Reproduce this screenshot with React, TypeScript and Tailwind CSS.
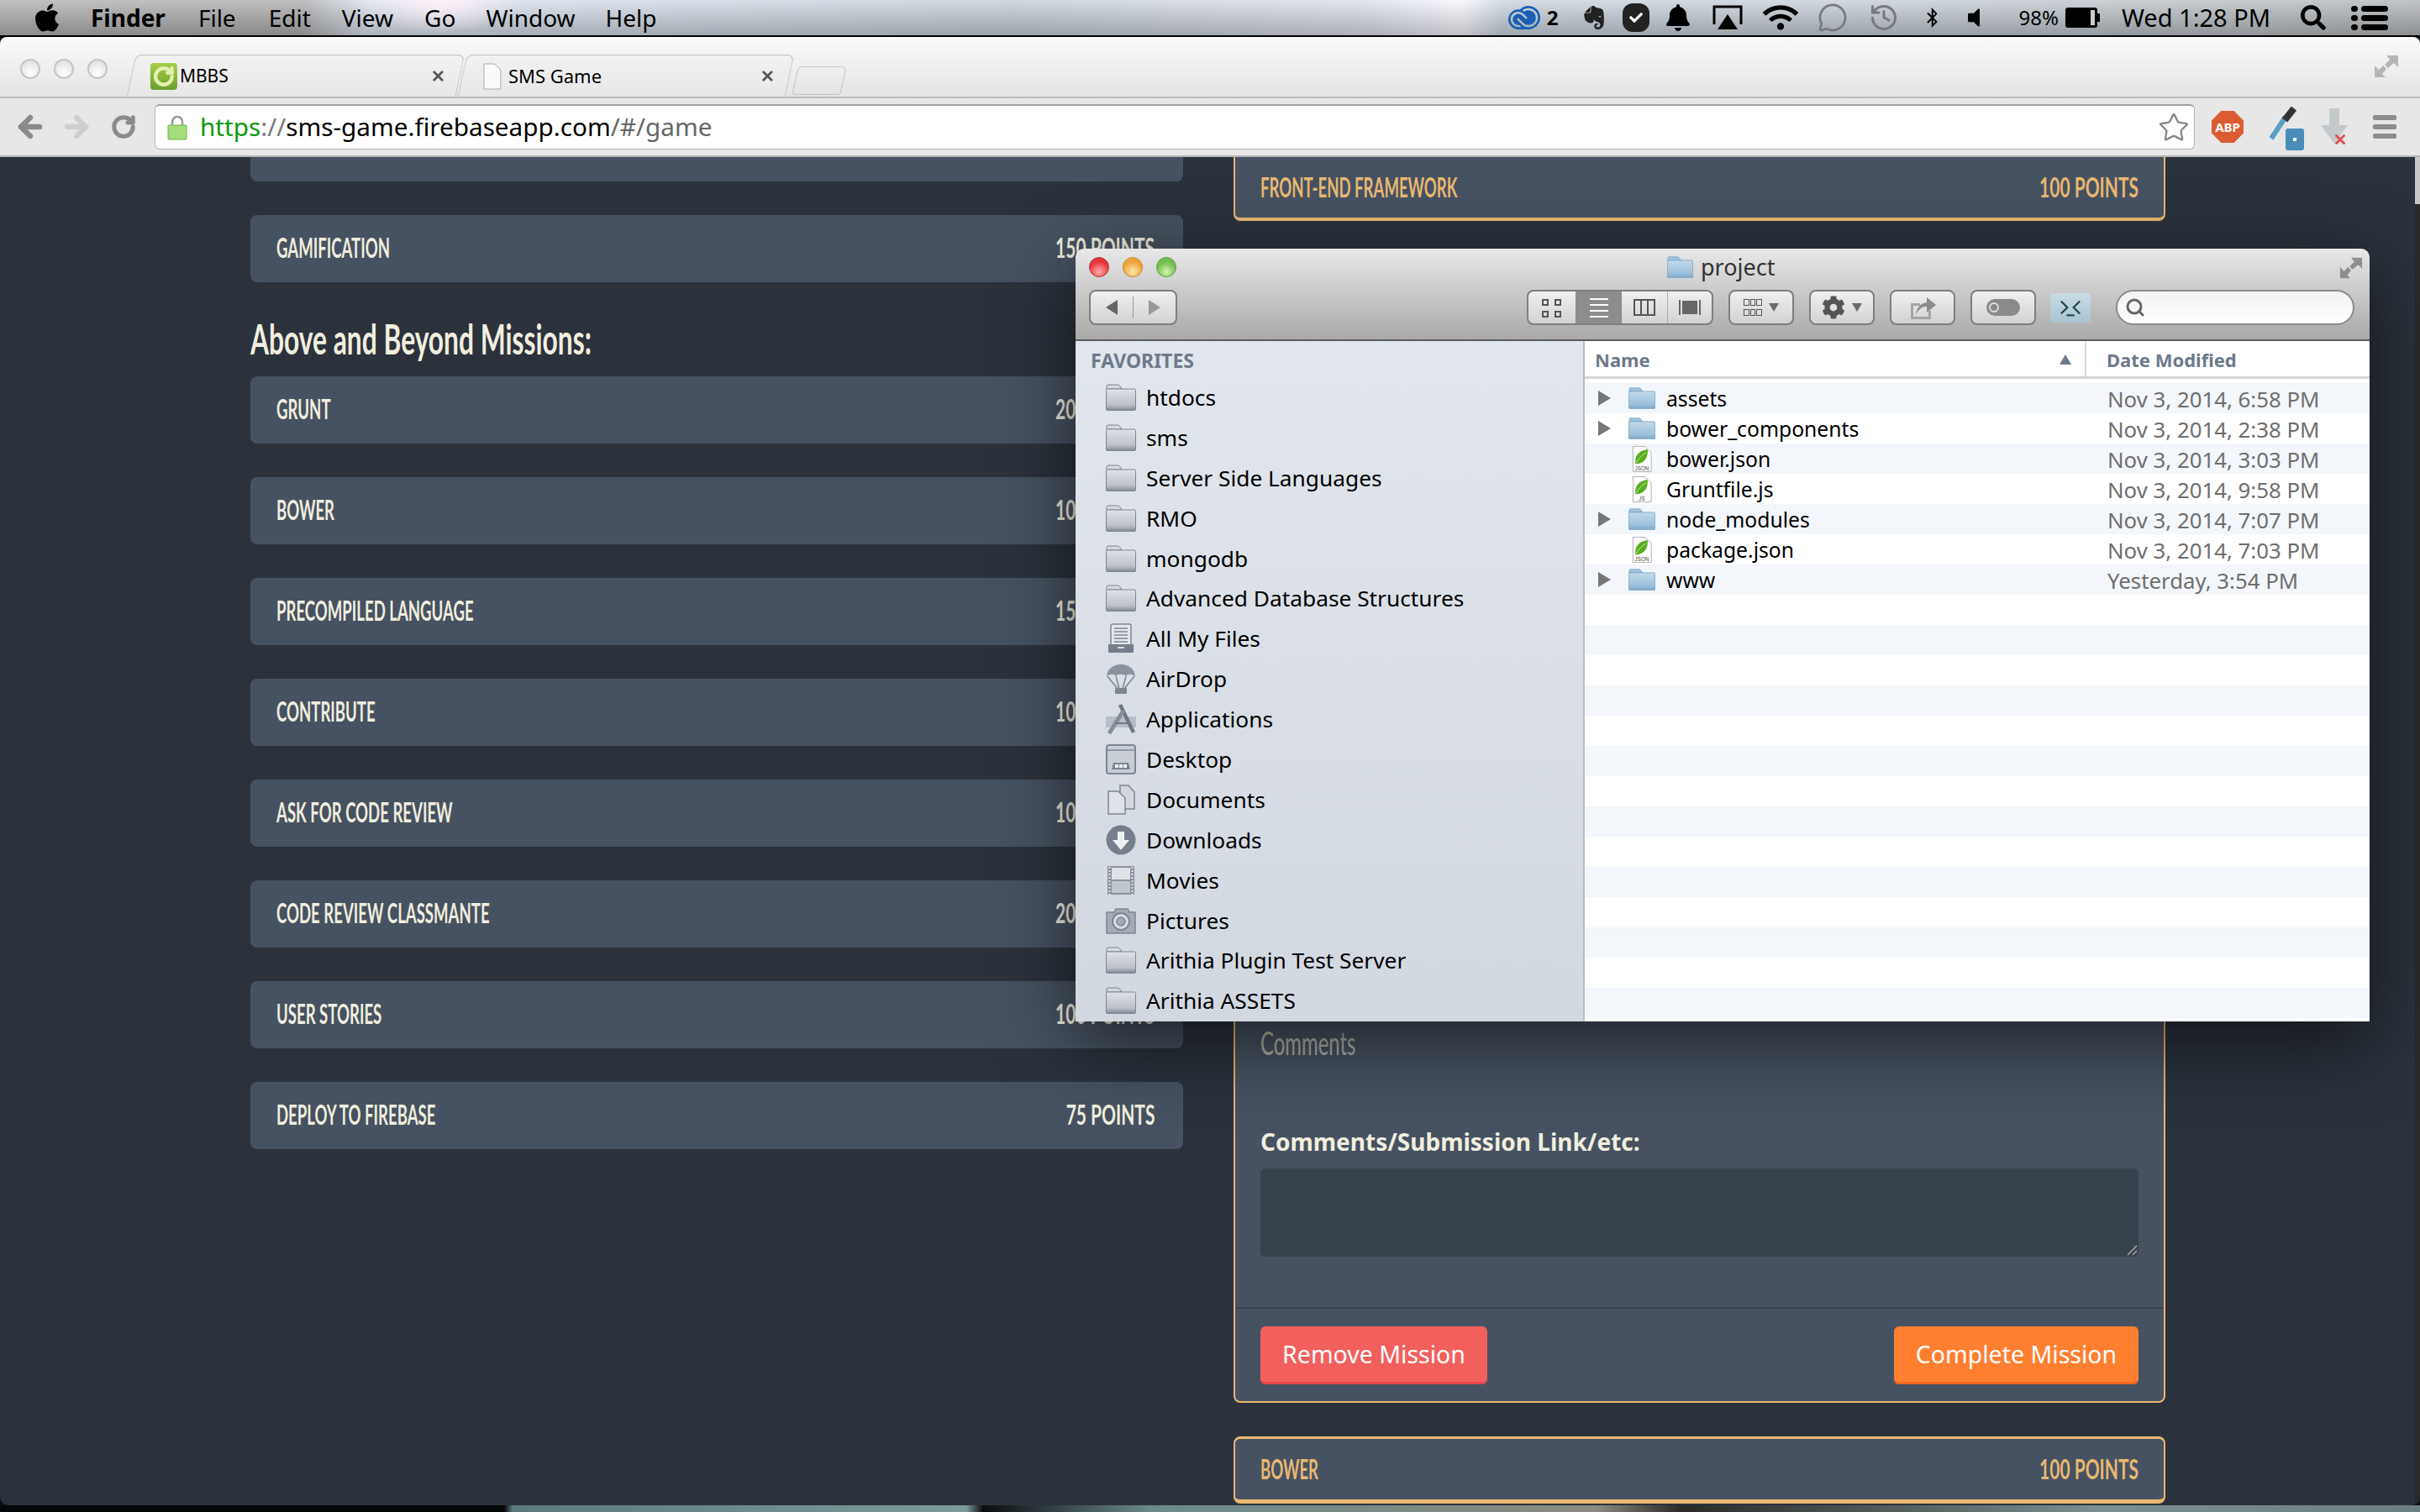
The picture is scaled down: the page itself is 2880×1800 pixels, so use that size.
import React from "react";
import { FaApple, FaBell, FaWifi, FaBluetoothB, FaVolumeOff, FaCog, FaSearch, FaCheck } from "react-icons/fa";
import { SiEvernote, SiAdobecreativecloud } from "react-icons/si";
import { MessageCircle, History, Star, RotateCw, ArrowLeft, ArrowRight, Search as LSearch, X } from "lucide-react";

function Cond({ children, right, className = "" }: { children: React.ReactNode; right?: boolean; className?: string }) {
  return (
    <span className={`inline-block whitespace-nowrap font-['Lato',sans-serif] font-bold text-[32px] leading-[40px] ${right ? "origin-right scale-x-[0.655]" : "origin-left scale-x-[0.58]"} ${className}`}>
      {children}
    </span>
  );
}

function Card({ name, points }: { name: string; points: string }) {
  return (
    <div className="h-[80px] w-full shrink-0 rounded-[8px] bg-[#465261] pl-[31px] pr-[34px] pb-[3px] flex items-center justify-between text-[#f1eedf]">
      <Cond>{name}</Cond>
      <Cond right>{points}</Cond>
    </div>
  );
}

function Folder({ blue, className = "" }: { blue?: boolean; className?: string }) {
  const id = blue ? "fb" : "fg";
  return (
    <svg viewBox="0 0 36 32" className={className} preserveAspectRatio="none">
      <defs>
        <linearGradient id={id} x1="0" y1="0" x2="0" y2="1">
          <stop offset="0" stopColor={blue ? "#c2d9ea" : "#dfe2e7"} />
          <stop offset="0.75" stopColor={blue ? "#9cc0dc" : "#bcc1c9"} />
          <stop offset="1" stopColor={blue ? "#7ba5c6" : "#7f8792"} />
        </linearGradient>
      </defs>
      <path d="M1 6 L1 3 Q1 1 3 1 L14 1 Q16 1 17 3 L19 6 Z" fill={blue ? "#a3c3dc" : "#d6dae0"} stroke={blue ? "#7ea5c4" : "#7d8591"} strokeWidth="1" />
      <rect x="0.5" y="6" width="35" height="25.5" rx="1.5" fill={`url(#${id})`} stroke={blue ? "#7ea5c4" : "#7d8591"} strokeWidth="1" />
    </svg>
  );
}

function FileIcon({ kind }: { kind: string }) {
  return (
    <svg viewBox="0 0 24 32" className="w-[24px] h-[31px]">
      <path d="M1 .5 H16 L23.5 8 V31.5 H1 Z" fill="#fff" stroke="#b0b0b0" />
      <path d="M19 4 C8 6 3 11 4 22 C13 22 20 16 19 4 Z" fill="#58ad1e" />
      <path d="M5 21 C8 15 11 12 17 8" stroke="#c6e8a2" fill="none" strokeWidth="1" />
      <text x="12" y="29.5" fontSize="6.5" textAnchor="middle" fill="#444" fontFamily="Liberation Sans, sans-serif">{kind}</text>
    </svg>
  );
}

const G = "#7d8692";
function SideIcon({ name }: { name: string }) {
  const c = "w-[36px] h-[36px]";
  switch (name) {
    case "files":
      return (
        <svg viewBox="0 0 36 36" className={c}>
          <rect x="6" y="1" width="24" height="26" rx="2" fill="#e3e6ea" stroke={G} strokeWidth="1.5" />
          <path d="M10 6H26M10 10H26M10 14H26M10 18H26M10 22H26" stroke={G} strokeWidth="1.5" />
          <path d="M3 25H33V34Q33 35 32 35H4Q3 35 3 34Z" fill="#757e8a" />
          <rect x="14" y="28" width="8" height="2" fill="#d5d9df" />
        </svg>
      );
    case "airdrop":
      return (
        <svg viewBox="0 0 36 36" className={c}>
          <path d="M1 15C2 6 9 1 18 1S34 6 35 15C30 12 26 12 24 15C22 12 14 12 12 15C10 12 6 12 1 15Z" fill="#8b939e" />
          <path d="M2 15L14 30M12 15L16 30M24 15L20 30M34 15L22 30" stroke={G} strokeWidth="1.5" fill="none" />
          <rect x="11" y="29" width="14" height="7" rx="1" fill="#7d8692" />
        </svg>
      );
    case "apps":
      return (
        <svg viewBox="0 0 36 36" className={c}>
          <path d="M0 15H36V28H0Z" fill="#a9b0ba" opacity="0.7" />
          <path d="M17 1L33 34" stroke="#6f7884" strokeWidth="4.5" fill="none" />
          <path d="M21 8L4 35" stroke="#858d99" strokeWidth="5" fill="none" />
          <path d="M11 23H26" stroke="#6f7884" strokeWidth="2" />
        </svg>
      );
    case "desktop":
      return (
        <svg viewBox="0 0 36 36" className={c}>
          <rect x="1" y="1" width="34" height="34" rx="3" fill="#c9ced6" stroke={G} strokeWidth="2" />
          <path d="M2 7H34" stroke={G} strokeWidth="1.5" />
          <path d="M7 30L9 22H27L29 30Z" fill="#7d8692" />
          <path d="M11 24H15V28H11ZM16 24H20V28H16ZM21 24H25V28H21Z" fill="#eef0f3" />
        </svg>
      );
    case "docs":
      return (
        <svg viewBox="0 0 36 36" className={c}>
          <path d="M17 1H27L34 9V29H17Z" fill="#d4d8de" stroke={G} strokeWidth="1.5" />
          <path d="M3 8H15L23 16V35H3Z" fill="#dfe2e7" stroke={G} strokeWidth="1.5" />
        </svg>
      );
    case "downloads":
      return (
        <svg viewBox="0 0 36 36" className={c}>
          <circle cx="18" cy="18" r="17.5" fill="#767f8b" />
          <path d="M14 8H22V18H28L18 30L8 18H14Z" fill="#eef0f3" />
        </svg>
      );
    case "movies":
      return (
        <svg viewBox="0 0 36 36" className={c}>
          <rect x="2" y="1" width="32" height="34" fill="#8a929e" />
          <rect x="7" y="3" width="22" height="14" fill="#dfe2e7" />
          <rect x="7" y="19" width="22" height="14" fill="#c2c7cf" />
          <path d="M4.5 2V35M31.5 2V35" stroke="#e6e8ec" strokeWidth="2" strokeDasharray="2 2" />
        </svg>
      );
    case "pictures":
      return (
        <svg viewBox="0 0 36 36" className={c}>
          <path d="M1 8H10L12 4H26L28 8H35V33H1Z" fill="#a4abb5" stroke={G} strokeWidth="1.5" strokeLinejoin="round" />
          <circle cx="18" cy="19" r="10" fill="#d8dce1" stroke="#7d8692" strokeWidth="2" />
          <circle cx="18" cy="19" r="5" fill="#a4abb5" stroke="#7d8692" strokeWidth="1.5" />
        </svg>
      );
    default:
      return <Folder className="w-[36px] h-[32px]" />;
  }
}

const side: [string, string][] = [
  ["htdocs", "f"], ["sms", "f"], ["Server Side Languages", "f"], ["RMO", "f"], ["mongodb", "f"],
  ["Advanced Database Structures", "f"], ["All My Files", "files"], ["AirDrop", "airdrop"], ["Applications", "apps"],
  ["Desktop", "desktop"], ["Documents", "docs"], ["Downloads", "downloads"], ["Movies", "movies"], ["Pictures", "pictures"],
  ["Arithia Plugin Test Server", "f"], ["Arithia ASSETS", "f"],
];

const files: [string, string, string, string][] = [
  ["assets", "Nov 3, 2014, 6:58 PM", "dir", ""],
  ["bower_components", "Nov 3, 2014, 2:38 PM", "dir", ""],
  ["bower.json", "Nov 3, 2014, 3:03 PM", "file", "JSON"],
  ["Gruntfile.js", "Nov 3, 2014, 9:58 PM", "file", "JS"],
  ["node_modules", "Nov 3, 2014, 7:07 PM", "dir", ""],
  ["package.json", "Nov 3, 2014, 7:03 PM", "file", "JSON"],
  ["www", "Yesterday, 3:54 PM", "dir", ""],
];

function TBtn({ w, children }: { w: string; children?: React.ReactNode }) {
  return (
    <div className={`${w} h-[42px] shrink-0 rounded-[8px] border-2 border-[#7e7e7e] bg-[linear-gradient(180deg,#f0f0f0,#d2d2d2)] flex items-center justify-center gap-[8px]`}>
      {children}
    </div>
  );
}

const Caret = () => <div className="w-0 h-0 border-x-[6px] border-x-transparent border-t-[10px] border-t-[#6a6a6a]" />;

function Finder() {
  return (
    <div className="absolute left-[1280px] top-[296px] w-[1540px] h-[920px] rounded-t-[10px] overflow-hidden flex flex-col shadow-[0_24px_90px_rgba(0,0,0,0.6)] font-['Noto_Sans',sans-serif]">
      <div className="relative h-[110px] shrink-0 bg-[linear-gradient(180deg,#e8e8e8,#a9a9a9)] border-b-2 border-[#5c5c5c]">
        <div className="absolute left-[16px] top-[10px] flex gap-[16px]">
          <div className="w-[24px] h-[24px] rounded-full border border-[#a33] bg-[radial-gradient(circle_at_50%_75%,#ffb0b0,#e8333b_60%)]" />
          <div className="w-[24px] h-[24px] rounded-full border border-[#b8862a] bg-[radial-gradient(circle_at_50%_75%,#ffe9a8,#eda33a_60%)]" />
          <div className="w-[24px] h-[24px] rounded-full border border-[#5a9a3a] bg-[radial-gradient(circle_at_50%_75%,#d4f5b0,#72bc4e_60%)]" />
        </div>
        <div className="absolute left-[704px] top-[6px] flex items-center gap-[9px]">
          <Folder blue className="w-[31px] h-[26px]" />
          <span className="text-[27px] leading-[32px] text-[#333]">project</span>
        </div>
        <svg viewBox="0 0 30 30" className="absolute left-[1504px] top-[9px] w-[28px] h-[28px]" fill="#8f8f8f">
          <path d="M15 2H29V16L24 11L17 17L13 13L19 7Z" /><path d="M1 28V14L6 19L11 14L15 18L10 24L14 28Z" />
        </svg>
        <div className="absolute left-[16px] right-[18px] top-[49px] flex items-center">
          <div className="w-[105px] h-[42px] rounded-[8px] border-2 border-[#7e7e7e] bg-[linear-gradient(180deg,#f0f0f0,#d2d2d2)] flex items-center justify-between px-[18px] relative">
            <div className="w-0 h-0 border-y-[9px] border-y-transparent border-r-[14px] border-r-[#666]" />
            <div className="absolute left-[50px] top-[6px] bottom-[6px] w-px bg-[#999]" />
            <div className="w-0 h-0 border-y-[9px] border-y-transparent border-l-[14px] border-l-[#999]" />
          </div>
          <div className="ml-[416px] w-[222px] h-[42px] rounded-[8px] border-2 border-[#7e7e7e] bg-[linear-gradient(180deg,#f0f0f0,#d2d2d2)] flex overflow-hidden">
            <div className="w-[56px] grid grid-cols-2 gap-[6px] px-[16px] py-[9px]">
              {[0, 1, 2, 3].map((i) => <div key={i} className="w-[8px] h-[8px] border-2 border-[#555]" />)}
            </div>
            <div className="w-[55px] bg-[#8d8d8d] flex flex-col justify-center items-center gap-[5px]">
              {[0, 1, 2, 3].map((i) => <div key={i} className="w-[22px] h-[2px] bg-white" />)}
            </div>
            <div className="w-[54px] flex items-center justify-center">
              <div className="w-[26px] h-[20px] border-2 border-[#555] flex justify-evenly"><div className="w-[2px] bg-[#555]" /><div className="w-[2px] bg-[#555]" /></div>
            </div>
            <div className="flex-1 flex items-center justify-center gap-[2px] border-l border-[#aaa]">
              <div className="w-[2px] h-[18px] bg-[#666]" /><div className="w-[18px] h-[16px] bg-[#666]" /><div className="w-[2px] h-[18px] bg-[#666]" />
            </div>
          </div>
          <div className="ml-[18px]"><TBtn w="w-[78px]">
            <div className="grid grid-cols-3 gap-[1px] w-[22px]">
              {[0, 1, 2, 3, 4, 5].map((i) => <div key={i} className={`h-[8px] border border-[#555] ${i < 3 ? "mb-[3px]" : ""}`} />)}
            </div>
            <Caret />
          </TBtn></div>
          <div className="ml-[18px]"><TBtn w="w-[78px]"><FaCog className="text-[#555] w-[28px] h-[28px]" /><Caret /></TBtn></div>
          <div className="ml-[18px]"><TBtn w="w-[78px]">
            <svg viewBox="0 0 34 30" className="w-[34px] h-[30px]"><path d="M3 10H14V13H6V26H24V19H27V29H3Z" fill="#a3a3a3" /><path d="M9 24C10 15 15 10 22 9V3L33 12L22 21V14C16 14 12 17 9 24Z" fill="#8d8d8d" /></svg>
          </TBtn></div>
          <div className="ml-[18px]"><TBtn w="w-[78px]"><div className="w-[40px] h-[20px] rounded-full bg-[#8a8a8a] flex items-center pl-[3px]"><div className="w-[12px] h-[12px] rounded-full border-2 border-[#ddd]" /></div></TBtn></div>
          <div className="ml-[17px] w-[48px] h-[35px] rounded-[4px] bg-[linear-gradient(180deg,#c9dce5,#a9c3d0)] flex items-center justify-center">
            <svg viewBox="0 0 30 24" className="w-[28px] h-[26px]" fill="none" stroke="#1d4a50" strokeWidth="2.5"><path d="M3 4L11 12L3 20M27 4L19 12L27 20" /><path d="M10 22H20" /></svg>
          </div>
          <div className="ml-[30px] flex-1 h-[42px] rounded-full border-2 border-[#8a8a8a] bg-[linear-gradient(180deg,#f2f2f2,#fff)] flex items-center pl-[9px]">
            <LSearch className="w-[24px] h-[24px] text-[#666]" strokeWidth={3} />
          </div>
        </div>
      </div>
      <div className="flex-1 flex min-h-0">
        <div className="w-[606px] shrink-0 border-r-2 border-[#b9bdc2] bg-[linear-gradient(180deg,#e2e6ed,#d2d8e0)] overflow-hidden pt-[9px] pl-[18px]">
          <div className="text-[23px] leading-[28px] font-bold text-[#6d7a8b]">FAVORITES</div>
          <div className="mt-[6px] flex flex-col">
            {side.map(([n, i]) => (
              <div key={n} className="h-[47.9px] shrink-0 flex items-center">
                <div className="w-[36px] ml-[18px] flex justify-center"><SideIcon name={i} /></div>
                <span className="ml-[12px] text-[26.3px] leading-[32px] text-black whitespace-nowrap">{n}</span>
              </div>
            ))}
          </div>
        </div>
        <div className="flex-1 bg-white flex flex-col min-w-0 overflow-hidden">
          <div className="h-[45px] shrink-0 flex items-stretch border-b-[3px] border-[#d4d4d4] text-[22px] font-bold text-[#6d7a8b]">
            <div className="w-[597px] pl-[12px] pt-[2px] flex items-center justify-between pr-[16px] border-r-2 border-[#dcdcdc]">
              <span>Name</span>
              <div className="w-0 h-0 border-x-[7px] border-x-transparent border-b-[12px] border-b-[#6d7a8b]" />
            </div>
            <div className="pl-[24px] pt-[2px] flex items-center">Date Modified</div>
          </div>
          <div className="h-[5px] shrink-0" />
          {Array.from({ length: 22 }).map((_, i) => {
            const f = files[i];
            return (
              <div key={i} className={`h-[36px] shrink-0 flex items-center text-[26px] ${i % 2 === 0 ? "bg-[#f3f6fa]" : "bg-white"}`}>
                {f && (
                  <>
                    <div className="w-[18px] ml-[16px]">{f[2] === "dir" && <div className="w-0 h-0 border-y-[9px] border-y-transparent border-l-[15px] border-l-[#777]" />}</div>
                    <div className="w-[32px] ml-[18px] flex justify-center">
                      {f[2] === "dir" ? <Folder blue className="w-[32px] h-[26px]" /> : <FileIcon kind={f[3]} />}
                    </div>
                    <span className="ml-[13px] w-[525px] text-[24.7px] text-black whitespace-nowrap translate-y-[1px]">{f[0]}</span>
                    <span className="text-[25.8px] text-[#6e6e6e] whitespace-nowrap translate-y-[1px]">{f[1]}</span>
                  </>
                )}
              </div>
            );
          })}
        </div>
      </div>
    </div>
  );
}

function MenuBar() {
  const items: [string, string][] = [["File", "ml-[39px]"], ["Edit", "ml-[39px]"], ["View", "ml-[37px]"], ["Go", "ml-[37px]"], ["Window", "ml-[36px]"], ["Help", "ml-[36px]"]];
  return (
    <div className="h-[44px] shrink-0 border-b-2 border-black flex items-center text-[28px] text-black font-['Noto_Sans',sans-serif] bg-[radial-gradient(ellipse_90px_40px_at_525px_0,#fff0fa,rgba(255,255,255,0)),linear-gradient(180deg,rgba(255,255,255,0.18),rgba(0,0,0,0.22)),linear-gradient(90deg,#b4b4b4_0,#b0b0b2_360px,#dfe6f2_440px,#d5dde8_700px,#c7d0da_1200px,#dde0ec_1620px,#f8f8ff_1740px,#cdd6e0_1790px,#c6ced6_2300px,#b5b8bb_2880px)]">
      <FaApple className="ml-[39px] w-[34px] h-[38px] text-black" />
      <span className="ml-[35px] font-bold text-[28px]">Finder</span>
      {items.map(([t, m]) => <span key={t} className={m}>{t}</span>)}
      <div className="ml-auto flex items-center">
        <SiAdobecreativecloud className="w-[38px] h-[38px] text-[#1a5fb4]" />
        <span className="ml-[8px] text-[24px] font-bold">2</span>
        <SiEvernote className="ml-[28px] w-[28px] h-[36px] text-[#222]" />
        <div className="ml-[20px] w-[32px] h-[34px] rounded-[12px] bg-[#222] flex items-center justify-center"><FaCheck className="text-white w-[16px] h-[16px]" /></div>
        <FaBell className="ml-[20px] w-[28px] h-[32px]" />
        <svg viewBox="0 0 38 32" className="ml-[26px] w-[38px] h-[32px]"><path d="M3 24V3H35V24" fill="none" stroke="#000" strokeWidth="3" /><path d="M19 12L31 30H7Z" fill="#000" /></svg>
        <FaWifi className="ml-[23px] w-[42px] h-[34px]" />
        <MessageCircle className="ml-[20px] w-[42px] h-[36px] text-[#77797c]" strokeWidth={1.8} />
        <History className="ml-[22px] w-[36px] h-[36px] text-[#77797c]" strokeWidth={2} />
        <FaBluetoothB className="ml-[32px] w-[15px] h-[30px]" />
        <FaVolumeOff className="ml-[34px] w-[16px] h-[28px]" />
        <span className="ml-[46px] text-[24px]">98%</span>
        <div className="ml-[8px] w-[38px] h-[24px] border-[3px] border-black bg-[linear-gradient(90deg,#000_85%,#ccc_85%)] rounded-[3px]" />
        <div className="w-[3px] h-[10px] bg-black mr-[26px]" />
        <span className="text-[29px] whitespace-nowrap">Wed 1:28 PM</span>
        <FaSearch className="ml-[36px] w-[30px] h-[30px]" />
        <div className="ml-[30px] mr-[38px] w-[44px] flex flex-col gap-[4px]">
          {[0, 1, 2].map((i) => <div key={i} className="flex gap-[4px]"><div className="w-[8px] h-[7px] rounded-full bg-black" /><div className="flex-1 h-[7px] rounded-full bg-black" /></div>)}
        </div>
      </div>
    </div>
  );
}

function Tab({ children, w }: { children: React.ReactNode; w: string }) {
  return (
    <div className={`${w} h-[50px] shrink-0 -skew-x-[12deg] rounded-t-[8px] border border-b-0 border-[#c2c2c2] bg-[linear-gradient(180deg,#f2f2f2,#e7e7e7)]`}>
      <div className="skew-x-[12deg] h-full flex items-center pl-[22px] pr-[16px] text-[22px] text-black">{children}</div>
    </div>
  );
}

function BrowserBar() {
  return (
    <div className="shrink-0 font-['Noto_Sans',sans-serif]">
      <div className="h-[73px] rounded-t-[8px] bg-[linear-gradient(180deg,#fafafa,#e4e4e4)] border-b-2 border-[#b9b9b9] relative flex items-end pl-[24px]">
        <div className="absolute left-[24px] top-[26px] flex gap-[16px]">
          {[0, 1, 2].map((i) => <div key={i} className="w-[24px] h-[24px] rounded-full border-2 border-[#c4c4c4] bg-[radial-gradient(circle_at_50%_75%,#fff,#dcdcdc)]" />)}
        </div>
        <div className="ml-[132px] flex items-end gap-[2px]">
          <Tab w="w-[392px]">
            <div className="w-[32px] h-[32px] rounded-[4px] bg-[linear-gradient(180deg,#a5cf4a,#6b9e2e)] flex items-center justify-center">
              <RotateCw className="w-[26px] h-[26px] text-[#e4f0b0]" strokeWidth={4} />
            </div>
            <span className="ml-[3px] text-[21px]">MBBS</span>
            <X className="ml-auto w-[19px] h-[19px] text-[#555]" strokeWidth={3.5} />
          </Tab>
          <Tab w="w-[390px]">
            <svg viewBox="0 0 22 32" className="ml-[2px] w-[22px] h-[32px]"><path d="M1 1H14L21 8V31H1Z" fill="#fafafa" stroke="#aaa" /></svg>
            <span className="ml-[8px]">SMS Game</span>
            <X className="ml-auto w-[19px] h-[19px] text-[#555]" strokeWidth={3.5} />
          </Tab>
          <div className="w-[58px] h-[34px] shrink-0 -skew-x-[12deg] rounded-t-[6px] rounded-b-[4px] border border-[#c4c4c4] bg-[linear-gradient(180deg,#efefef,#e4e4e4)] ml-[4px] mb-[2px]" />
        </div>
        <svg viewBox="0 0 30 30" className="absolute right-[25px] top-[20px] w-[30px] h-[30px]" fill="#b5b5b5">
          <path d="M15 2H29V16L24 11L17 17L13 13L19 7Z" /><path d="M1 28V14L6 19L11 14L15 18L10 24L14 28Z" />
        </svg>
      </div>
      <div className="h-[70px] bg-[#e7e7e7] border-b-2 border-[#b5b5b5] flex items-center">
        <ArrowLeft className="ml-[17px] w-[38px] h-[38px] text-[#8a8a8a]" strokeWidth={4} />
        <ArrowRight className="ml-[17px] w-[38px] h-[38px] text-[#cfcfcf]" strokeWidth={4} />
        <RotateCw className="ml-[22px] w-[30px] h-[30px] text-[#8a8a8a]" strokeWidth={4} />
        <div className="ml-[22px] w-[2428px] h-[54px] rounded-[6px] border border-[#b0b0b0] border-t-2 border-t-[#a0a0a0] bg-white flex items-center pl-[14px] pr-[5px]">
          <svg viewBox="0 0 24 30" className="w-[24px] h-[30px]"><path d="M6 13V8a6 6 0 0 1 12 0V13" fill="none" stroke="#999" strokeWidth="2.5" /><rect x="1" y="12" width="22" height="17" rx="1" fill="#a4dd7c" stroke="#77b04e" /></svg>
          <span className="ml-[15px] text-[29.7px] whitespace-nowrap">
            <span className="text-[#0a9a0a]">https</span><span className="text-[#777]">://</span><span className="text-black">sms-game.firebaseapp.com</span><span className="text-[#666]">/#/game</span>
          </span>
          <Star className="ml-auto w-[38px] h-[38px] text-[#888]" strokeWidth={1.5} />
        </div>
        <div className="ml-[20px] w-[38px] h-[38px] bg-[#dc5b33] [clip-path:polygon(30%_0,70%_0,100%_30%,100%_70%,70%_100%,30%_100%,0_70%,0_30%)] flex items-center justify-center text-white text-[15px] font-bold">ABP</div>
        <div className="relative ml-[30px] w-[36px] h-[48px]">
          <svg viewBox="0 0 36 48" className="w-[36px] h-[48px]"><path d="M3 38L20 12" stroke="#5a9fc9" strokeWidth="6" /><path d="M19 16L30 2" stroke="#333" strokeWidth="8" /></svg>
          <div className="absolute right-[-6px] bottom-[-4px] w-[22px] h-[26px] rounded-[3px] bg-[#4a8db8] flex items-center justify-center"><div className="w-[4px] h-[4px] bg-white" /></div>
        </div>
        <div className="relative ml-[26px] w-[32px] h-[44px]">
          <svg viewBox="0 0 32 44" className="w-[32px] h-[44px]"><path d="M10 0H22V20H32L16 42L0 20H10Z" fill="#c4c9cc" /></svg>
          <X className="absolute right-[0px] bottom-[-2px] w-[18px] h-[18px] text-[#e05050]" strokeWidth={4} />
        </div>
        <div className="ml-[30px] w-[28px] flex flex-col gap-[5px]">
          {[0, 1, 2].map((i) => <div key={i} className="h-[6px] rounded-[2px] bg-[#8c8c8c]" />)}
        </div>
      </div>
    </div>
  );
}

const OCard = ({ children, className = "" }: { children: React.ReactNode; className?: string }) => (
  <div className={`w-full shrink-0 bg-[#465261] border-[#e9b872] flex items-center justify-between px-[30px] text-[#e9b872] ${className}`}>{children}</div>
);

export default function App() {
  const left: [string, string][] = [
    ["GRUNT", "200 POINTS"], ["BOWER", "100 POINTS"], ["PRECOMPILED LANGUAGE", "150 POINTS"], ["CONTRIBUTE", "100 POINTS"],
    ["ASK FOR CODE REVIEW", "100 POINTS"], ["CODE REVIEW CLASSMANTE", "200 POINTS"], ["USER STORIES", "100 POINTS"], ["DEPLOY TO FIREBASE", "75 POINTS"],
  ];
  return (
    <div className="relative w-[2880px] h-[1800px] overflow-hidden bg-[#0a0f12] flex flex-col">
      <MenuBar />
      <BrowserBar />
      <div className="relative h-[1605px] shrink-0 bg-[#2b323c] rounded-b-[10px] overflow-hidden flex pl-[298px]">
        <div className="w-[1110px] shrink-0 flex flex-col">
          <div className="h-[29px] shrink-0 bg-[#465261] rounded-b-[8px]" />
          <div className="mt-[40px]"><Card name="GAMIFICATION" points="150 POINTS" /></div>
          <div className="h-[112px] shrink-0 flex items-center pt-[22px]">
            <span className="whitespace-nowrap inline-block origin-left scale-x-[0.635] font-['Lato',sans-serif] font-bold text-[50px] leading-[56px] text-[#f1eedf]">Above and Beyond Missions:</span>
          </div>
          <div className="flex flex-col gap-[40px]">
            {left.map(([n, p]) => <Card key={n} name={n} points={p} />)}
          </div>
        </div>
        <div className="ml-[60px] w-[1109px] shrink-0 flex flex-col">
          <OCard className="h-[76px] border-x-2 border-b-[4px] rounded-b-[8px]">
            <Cond>FRONT-END FRAMEWORK</Cond>
            <Cond right>100 POINTS</Cond>
          </OCard>
          <div className="mt-[40px] h-[1367px] shrink-0 rounded-[8px] border-2 border-[#e9b872] bg-[#465261] flex flex-col">
            <div className="flex-1 flex flex-col justify-end px-[30px] pb-[60px]">
              <span className="whitespace-nowrap inline-block origin-left scale-x-[0.63] font-['Lato',sans-serif] text-[38px] leading-[40px] text-[#b4b3a6] -translate-y-[2px]">Comments</span>
              <div className="mt-[79px] font-['Noto_Sans',sans-serif] text-[28px] leading-[34px] font-bold text-[#f1eedf]">Comments/Submission Link/etc:</div>
              <div className="relative mt-[15px] h-[105px] rounded-[6px] bg-[#38424c]">
                <svg viewBox="0 0 14 14" className="absolute right-[1px] bottom-[1px] w-[14px] h-[14px]"><path d="M13 2L2 13M13 8L8 13" stroke="#aaa" strokeWidth="1.5" /></svg>
              </div>
            </div>
            <div className="h-[112px] shrink-0 border-t-[2px] border-[#38424c] flex justify-between px-[30px] pt-[21px] font-['Noto_Sans',sans-serif] text-[28.5px] text-white">
              <div className="w-[270px] h-[69px] rounded-[6px] bg-[#f2605d] border-b-[3px] border-[#e8484a] flex items-center justify-center">Remove Mission</div>
              <div className="w-[291px] h-[69px] rounded-[6px] bg-[#ff7f31] border-b-[3px] border-[#f26a1c] flex items-center justify-center">Complete Mission</div>
            </div>
          </div>
          <OCard className="mt-[40px] h-[80px] border-x-2 border-t-[3px] border-b-[5px] rounded-[8px]">
            <Cond>BOWER</Cond>
            <Cond right>100 POINTS</Cond>
          </OCard>
        </div>
        <div className="absolute right-0 top-0 bottom-0 w-[6px] bg-[#2a2a2a]"><div className="h-[56px] bg-[#c8c8c8]" /></div>
      </div>
      <div className="flex-1 bg-[linear-gradient(90deg,#050608_0,#050608_600px,#5a7a7c_610px,#7d9a9a_1150px,#0a0d10_1170px,#6b8a8a_1370px,#8a8a80_1900px,#2a2a28_2000px,#7a9090_2500px,#6a8080_2880px)]" />
      <Finder />
    </div>
  );
}
